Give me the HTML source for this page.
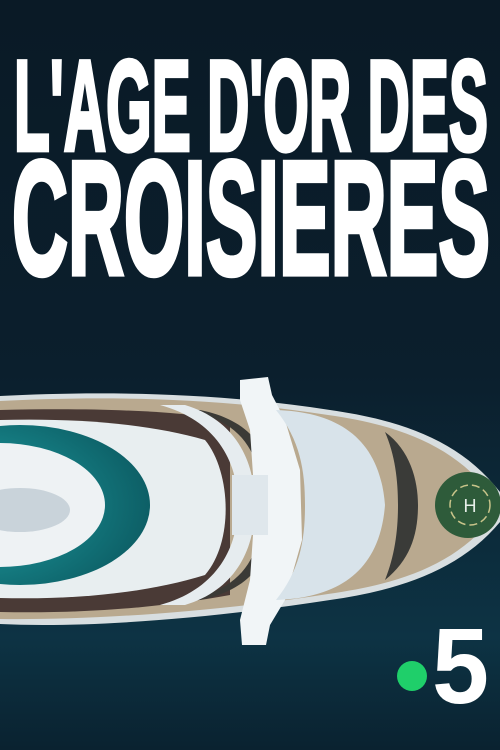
<!DOCTYPE html>
<html><head><meta charset="utf-8"><style>
html,body{margin:0;padding:0;width:500px;height:750px;overflow:hidden;background:#0b1c28}
svg{display:block}
</style></head><body>
<svg width="500" height="750" viewBox="0 0 500 750" xmlns="http://www.w3.org/2000/svg">
<defs>
<linearGradient id="sea" x1="0" y1="0" x2="0" y2="1">
<stop offset="0" stop-color="#0a1a26"/><stop offset="0.5" stop-color="#0b1f2d"/><stop offset="0.85" stop-color="#0d3344"/><stop offset="1" stop-color="#0a2230"/>
</linearGradient>
<radialGradient id="pool" cx="0.3" cy="0.5" r="0.7"><stop offset="0" stop-color="#1fa3a6"/><stop offset="1" stop-color="#0d5f66"/></radialGradient>
</defs>
<rect width="500" height="750" fill="url(#sea)"/>
<path d="M0 396 C80 392 200 390 330 410 C400 420 460 440 500 492 L500 522 C460 570 400 590 330 600 C200 620 80 628 0 624 Z" fill="#d8dee0"/>
<path d="M0 401 C80 397 200 395 328 415 C398 425 455 445 494 498 L494 516 C455 566 398 584 328 594 C200 614 80 620 0 619 Z" fill="#b9a98f"/>
<path d="M0 410 C90 408 170 410 230 420 L230 595 C170 606 90 614 0 612 Z" fill="#4a3a36"/>
<path d="M0 420 C80 418 150 424 205 440 C230 470 235 540 205 575 C150 592 80 600 0 598 Z" fill="#e8eef0"/>
<ellipse cx="20" cy="505" rx="130" ry="80" fill="url(#pool)"/>
<ellipse cx="0" cy="505" rx="105" ry="62" fill="#eef2f4"/>
<ellipse cx="20" cy="510" rx="50" ry="22" fill="#c9d3da"/>
<path d="M185 410 C240 420 262 450 262 505 C262 560 240 590 185 600 L200 600 C250 590 275 560 275 505 C275 450 250 420 200 410 Z" fill="#3b3a36"/>
<path d="M160 405 C215 420 238 460 238 505 C238 550 215 590 160 605 L185 605 C235 590 255 550 255 505 C255 460 235 420 185 405 Z" fill="#e6ecef"/>
<path d="M240 380 L268 377 L272 395 L285 420 L300 470 L302 540 L285 600 L270 625 L266 645 L242 645 L240 620 L250 580 L255 505 L250 430 L240 400 Z" fill="#f1f5f7"/>
<rect x="232" y="475" width="36" height="60" fill="#dfe7ec"/>
<path d="M276 410 C340 412 380 440 385 505 C380 570 340 598 276 600 C300 570 305 540 305 505 C305 470 300 440 276 410 Z" fill="#d8e3ea"/>
<path d="M385 432 C410 450 418 480 418 505 C418 535 410 560 385 580 C395 555 398 530 398 505 C398 480 395 455 385 432 Z" fill="#3a3b38"/>
<circle cx="468" cy="505" r="33" fill="#2e5b3a"/>
<circle cx="470" cy="505" r="20" fill="none" stroke="#c8c48a" stroke-width="1.5" stroke-dasharray="8 4"/>
<text x="470" y="512" font-family="Liberation Sans, sans-serif" font-size="18" fill="#e6efe8" text-anchor="middle">H</text>
<g transform="translate(0,150) scale(1,1.17)">
<text x="14" y="0" font-family="'Liberation Sans Narrow','Liberation Sans',sans-serif" font-weight="bold" font-size="110" fill="#fff" stroke="#fff" stroke-width="4" textLength="474" lengthAdjust="spacingAndGlyphs">L'AGE D'OR DES</text>
</g>
<g transform="translate(0,274) scale(1,1.33)">
<text x="12" y="0" font-family="'Liberation Sans Narrow','Liberation Sans',sans-serif" font-weight="bold" font-size="122" fill="#fff" stroke="#fff" stroke-width="4" textLength="478" lengthAdjust="spacingAndGlyphs">CROISIERES</text>
</g>
<circle cx="412" cy="676" r="15" fill="#1fcf6a"/>
<text x="432" y="703" font-family="'Liberation Sans',sans-serif" font-weight="bold" font-size="108" fill="#fff" textLength="57" lengthAdjust="spacingAndGlyphs">5</text>
</svg>
</body></html>
